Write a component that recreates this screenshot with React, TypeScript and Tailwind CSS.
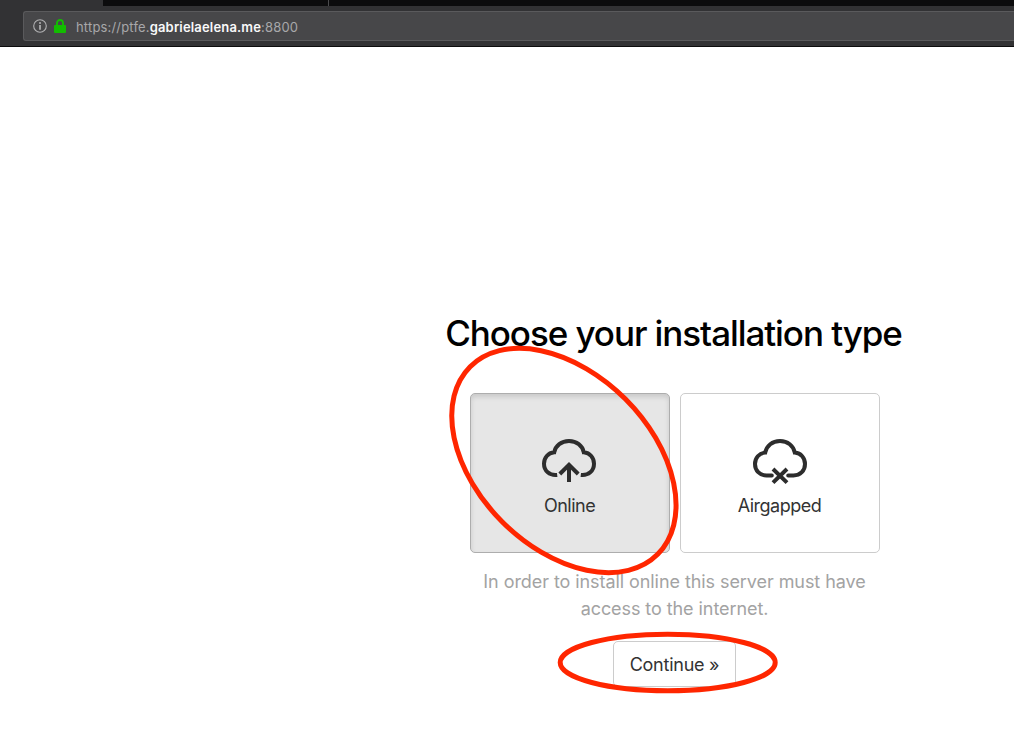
import type { ReactNode } from "react";

function AddressBar() {
  return (
    <header className="h-[47px] border-b border-[#0c0c0d] bg-[#323234]">
      <div className="flex h-[6px]">
        <div className="w-[103px]" />
        <div className="w-[225px] bg-[#0c0c0d]" />
        <div className="w-px bg-[#4b4b4d]" />
        <div className="flex-1 bg-[#0c0c0d]" />
      </div>
      <div className="mt-[5px] ml-[23px] flex h-[30px] items-center rounded-l-[3px] border border-r-0 border-[#5a5a5c] bg-[#474749] pl-[9px]">
        <svg className="h-[14px] w-[14px]" viewBox="0 0 14 14" fill="none">
          <circle cx="7" cy="7" r="6.3" stroke="#b1b1b3" strokeWidth="1.1" />
          <circle cx="7" cy="4.1" r="1" fill="#b1b1b3" />
          <path d="M7 6v4.7" stroke="#b1b1b3" strokeWidth="1.7" />
        </svg>
        <svg className="ml-[7px] h-[14px] w-[12px]" viewBox="0 0 12 14" fill="none">
          <path d="M3 7V4a3 3 0 0 1 6 0v3" stroke="#12bc00" strokeWidth="1.9" />
          <rect y="6" width="12" height="8" rx="1" fill="#12bc00" />
        </svg>
        <p className="ml-[10px] pt-[3px] text-[13px] tracking-[0.17px] whitespace-nowrap text-[#a8a8aa]">
          https://ptfe.<span className="font-semibold text-[#f9f9fa]">gabrielaelena.me</span>:8800
        </p>
      </div>
    </header>
  );
}

function OnlineIcon() {
  return (
    <svg className="h-[46px] w-[58px]" viewBox="0 0 58 46" fill="none" stroke="#2d2d2d" strokeWidth="4">
      <path d="M17.2 38.9C9.5 39.8 4 34.9 4 27.8C4 21.6 8 16.9 14.2 16.3C15.6 9.5 21.3 5 29 5S42.4 9.5 43.8 16.3C50 16.9 54 21.6 54 27.8C54 34.9 48.5 39.8 40.8 38.9" />
      <path d="M29 46V29M19.8 38L29 28.8L38.2 38" />
    </svg>
  );
}

function AirgappedIcon() {
  return (
    <svg className="ml-px h-[50px] w-[58px]" viewBox="0 0 58 50" fill="none" stroke="#2d2d2d" strokeWidth="4" strokeLinecap="round">
      <path d="M20.8 39.4H15.5C8.6 39.4 4 34.5 4 28C4 21.9 8 17.2 14.2 16.6C15.6 9.7 21.3 5 29 5S42.4 9.7 43.8 16.6C50 17.2 54 21.9 54 28C54 34.5 49.4 39.4 42.5 39.4H37.2" />
      <path strokeLinecap="butt" d="M22 33L36 46.6M36 33L22 46.6" />
    </svg>
  );
}

function Option({ icon, label, selected }: { icon: ReactNode; label: string; selected?: boolean }) {
  return (
    <button
      className={
        selected
          ? "flex h-[160px] w-[200px] flex-col items-center rounded-[5px] border border-[#adadad] bg-[#e6e6e6] pt-[42px] shadow-[inset_0_3px_5px_rgba(0,0,0,0.125)]"
          : "flex h-[160px] w-[200px] flex-col items-center rounded-[5px] border border-[#cccccc] bg-white pt-[42px]"
      }
    >
      <span className="mr-[2px] flex h-[50px] items-start">{icon}</span>
      <span className="mr-px mt-[8px] text-[18px] leading-[24px] tracking-[-0.5px] text-[#333333]">{label}</span>
    </button>
  );
}

function Highlights() {
  return (
    <svg className="pointer-events-none absolute inset-0 h-[742px] w-[1014px]" viewBox="0 0 1014 742" fill="none" stroke="#ff2600" strokeWidth="5">
      <ellipse cx="563.9" cy="460.5" rx="132.6" ry="87" transform="rotate(45 563.9 460.5)" />
      <ellipse cx="667.7" cy="662.5" rx="107.5" ry="28.3" />
    </svg>
  );
}

export default function App() {
  return (
    <div className="relative h-[742px] w-[1014px] overflow-hidden bg-white font-['Inter',sans-serif]">
      <AddressBar />
      <main className="ml-[335px] flex w-[679px] flex-col items-center pt-[264px]">
        <h1 className="mr-[2px] text-[35px] leading-[44px] font-medium tracking-[-1.07px] whitespace-nowrap text-black">
          Choose your installation type
        </h1>
        <div className="mt-[38px] ml-px flex gap-[10px]">
          <Option icon={<OnlineIcon />} label="Online" selected />
          <Option icon={<AirgappedIcon />} label="Airgapped" />
        </div>
        <p className="mt-[15px] text-center text-[18px] leading-[27px] tracking-[-0.07px] whitespace-nowrap text-[#a3a3a3]">
          In order to install online this server must have
          <br />
          access to the internet.
        </p>
        <button className="mt-[19px] h-[46px] w-[123px] rounded-[5px] border border-[#cccccc] bg-white text-[18px] tracking-[-0.25px] text-[#333333]">
          Continue »
        </button>
      </main>
      <Highlights />
    </div>
  );
}
